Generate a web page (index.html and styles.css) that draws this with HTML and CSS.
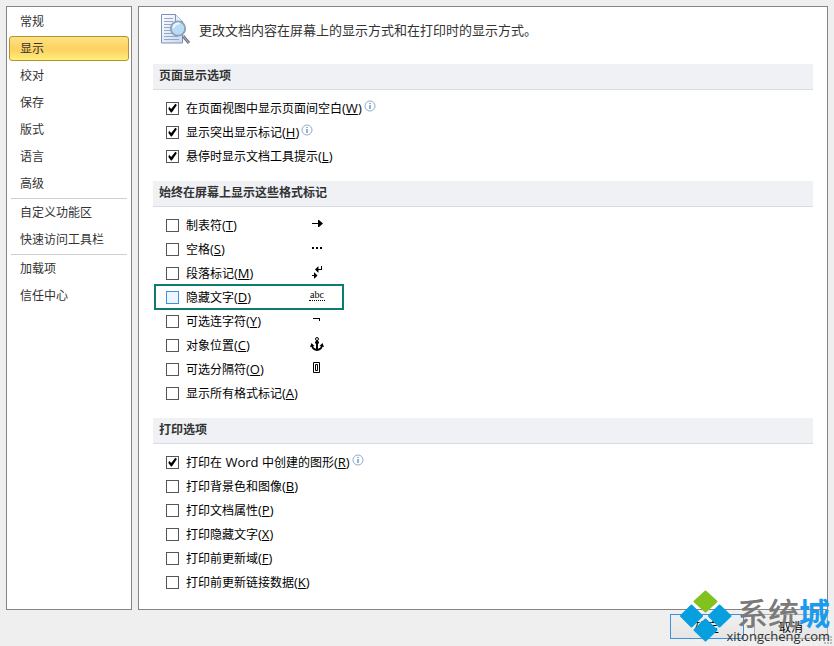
FILE: index.html
```html
<!DOCTYPE html>
<html lang="zh-CN">
<head>
<meta charset="utf-8">
<title>Word 选项</title>
<link rel="stylesheet" href="styles.css">
</head>
<body>
<svg class="defs" aria-hidden="true">
  <symbol id="info" viewBox="0 0 12 12"><circle cx="6" cy="6" r="5" fill="#fff" stroke="#8fabce"/><path d="M6 5v4M6 3v1" stroke="#4a7ebb" stroke-width="1.2"/></symbol>
</svg>
<div class="dialog">
  <nav class="sidebar">
    <a href="#">常规</a>
    <a href="#" class="active">显示</a>
    <a href="#">校对</a>
    <a href="#">保存</a>
    <a href="#">版式</a>
    <a href="#">语言</a>
    <a href="#">高级</a>
    <hr>
    <a href="#">自定义功能区</a>
    <a href="#">快速访问工具栏</a>
    <hr>
    <a href="#">加载项</a>
    <a href="#">信任中心</a>
  </nav>
  <main class="panel">
    <header class="intro">
      <svg width="32" height="32" viewBox="0 0 32 32" aria-hidden="true">
        <defs><linearGradient id="page" x2="1" y2="1"><stop stop-color="#fff"/><stop offset="1" stop-color="#c9d8ee"/></linearGradient></defs>
        <path d="M.5.500h14l7 7v21.500h-21z" fill="url(#page)" stroke="#7c92b8"/>
        <path d="M14.500.500v7h7" fill="#e5edf8" stroke="#7c92b8"/>
        <path d="M3 4.500h9M3 7.500h9M3 10.500h7M3 13.500h6M3 16.500h6M3 19.500h8M3 22.500h14M3 25.500h15" stroke="#91a8cd"/>
        <path d="M22 22l6 7" stroke="#70747b" stroke-width="3"/>
        <path d="M22 22l5.500 6.500" stroke="#b4bac2"/>
        <circle cx="17" cy="14.500" r="7.200" fill="#b9dcf5" stroke="#8f9fb6" stroke-width="1.800"/>
        <path d="M12.500 14a5 5 0 0 1 6-4.500" fill="none" stroke="#eef8ff" stroke-width="2"/>
      </svg>
      <p>更改文档内容在屏幕上的显示方式和在打印时的显示方式。</p>
    </header>

    <section>
      <h2>页面显示选项</h2>
      <div class="row"><label><input type="checkbox" checked>在页面视图中显示页面间空白<span class="latin">(<u>W</u>)</span></label><svg class="info"><use href="#info"/></svg></div>
      <div class="row"><label><input type="checkbox" checked>显示突出显示标记<span class="latin">(<u>H</u>)</span></label><svg class="info"><use href="#info"/></svg></div>
      <div class="row"><label><input type="checkbox" checked>悬停时显示文档工具提示<span class="latin">(<u>L</u>)</span></label></div>
    </section>

    <section>
      <h2>始终在屏幕上显示这些格式标记</h2>
      <div class="row mark-row"><label><input type="checkbox">制表符<span class="latin">(<u>T</u>)</span></label>
        <svg class="mark" viewBox="0 0 16 16"><path d="M3 7h6V4h1l4 3.500L10 11H9V8H3z"/></svg></div>
      <div class="row mark-row"><label><input type="checkbox">空格<span class="latin">(<u>S</u>)</span></label>
        <svg class="mark" viewBox="0 0 16 16"><path d="M3 7h2v2H3zM7 7h2v2H7zM11 7h2v2h-2z"/></svg></div>
      <div class="row mark-row"><label><input type="checkbox">段落标记<span class="latin">(<u>M</u>)</span></label>
        <svg class="mark" viewBox="0 0 16 16"><path d="M12 2h1v4H9.500v2.500H9L6 5.500l3-3h.5V5H12zM3 11h2V8.500h.5l3 3-3 3H5V12H3z"/></svg></div>
      <div class="row mark-row highlight"><label><input type="checkbox">隐藏文字<span class="latin">(<u>D</u>)</span></label>
        <span class="mark abc">abc</span></div>
      <div class="row mark-row"><label><input type="checkbox">可选连字符<span class="latin">(<u>Y</u>)</span></label>
        <svg class="mark" viewBox="0 0 16 16"><path d="M4 6h7v3h-1V7H4z"/></svg></div>
      <div class="row mark-row"><label><input type="checkbox">对象位置<span class="latin">(<u>C</u>)</span></label>
        <svg class="mark" viewBox="0 0 16 16"><path d="M8 4v10" fill="none" stroke="#000" stroke-width="2"/><path d="M6 6.500h4M3 9c0 3 2 4.500 5 5 3-.5 5-2 5-5" fill="none" stroke="#000" stroke-width="1.800"/><circle cx="8" cy="3" r="1.500" fill="#fff" stroke="#000"/><path d="M1 11l1.500-4 3 3zM15 11l-1.500-4-3 3z"/></svg></div>
      <div class="row mark-row"><label><input type="checkbox">可选分隔符<span class="latin">(<u>O</u>)</span></label>
        <svg class="mark" viewBox="0 0 16 16"><path d="M4.500 2.500h6v10h-6zM6.500 4.500h2v6h-2z" fill="none" stroke="#000"/></svg></div>
      <div class="row"><label><input type="checkbox">显示所有格式标记<span class="latin">(<u>A</u>)</span></label></div>
    </section>

    <section>
      <h2>打印选项</h2>
      <div class="row"><label><input type="checkbox" checked>打印在<span class="latin"> Word </span>中创建的图形<span class="latin">(<u>R</u>)</span></label><svg class="info"><use href="#info"/></svg></div>
      <div class="row"><label><input type="checkbox">打印背景色和图像<span class="latin">(<u>B</u>)</span></label></div>
      <div class="row"><label><input type="checkbox">打印文档属性<span class="latin">(<u>P</u>)</span></label></div>
      <div class="row"><label><input type="checkbox">打印隐藏文字<span class="latin">(<u>X</u>)</span></label></div>
      <div class="row"><label><input type="checkbox">打印前更新域<span class="latin">(<u>F</u>)</span></label></div>
      <div class="row"><label><input type="checkbox">打印前更新链接数据<span class="latin">(<u>K</u>)</span></label></div>
    </section>
  </main>
</div>
<footer class="actions">
  <button type="button" class="primary">确定</button>
  <button type="button">取消</button>
</footer>
<svg class="grip" width="9" height="9" viewBox="0 0 9 9" aria-hidden="true"><path d="M6 0h2v2H6zM3 3h2v2H3zM6 3h2v2H6zM0 6h2v2H0zM3 6h2v2H3zM6 6h2v2H6z" fill="#bdbdbd"/></svg>
<div class="brand">
  <svg width="52" height="52" viewBox="0 0 52 52" aria-hidden="true">
    <g stroke-linejoin="round" stroke-width="2">
      <path d="M25.500 1.500l11 10-11 10-11-10z" fill="#82c11e" stroke="#82c11e"/>
      <path d="M11.500 15.500l10.500 10.500-10.500 10.500L1 26zM39.500 15.500l11 10.500-11 10.500L29 26zM25.500 29.500l11 10.500-11 10.500-11-10.500z" fill="#089fdf" stroke="#089fdf"/>
    </g>
  </svg>
  <div class="brand-text">
    <div class="brand-name">系统<span>城</span></div>
    <div class="brand-url">xitongcheng.com</div>
  </div>
</div>
</body>
</html>
```

FILE: styles.css
```css
* { box-sizing: border-box; }

body {
  margin: 0;
  min-height: 100vh;
  padding: 6px 6px 0;
  background: #efefef;
  color: #000;
  font: 12px/24px "Noto Sans CJK SC", sans-serif;
}

.defs { position: absolute; width: 0; height: 0; }

.dialog { display: flex; gap: 6px; }

.sidebar, .panel { background: #fff; border: 1px solid #848484; }

.sidebar { flex: 0 0 126px; padding: 2px; }

.sidebar a {
  display: block;
  margin-bottom: 2px;
  padding: 0 10px 2px;
  border: 1px solid transparent;
  border-radius: 3px;
  color: #333;
  line-height: 21px;
  text-decoration: none;
}

.sidebar .active {
  border-color: #b5922e;
  background: linear-gradient(#fde384, #fdd365 45%, #fdd463 60%, #fff07c);
}

.sidebar hr {
  margin: 0 2px 1px;
  border: 0;
  border-top: 1px solid #d0d0d0;
}

.panel { flex: 1; padding: 6px 14px 2px; }

.intro {
  display: flex;
  align-items: center;
  gap: 6px;
  height: 34px;
  margin-bottom: 17px;
  padding-left: 8px;
  color: #333;
  font-size: 13px;
}

.intro p { margin: 0; }

section { margin-bottom: 13px; }

h2 {
  margin: 0 0 6px;
  padding: 0 6px 3px;
  border-bottom: 1px solid #d9dce2;
  background: #eff1f5;
  color: #333;
  font-size: 12px;
  line-height: 22px;
}

.row {
  display: flex;
  align-items: center;
  height: 24px;
  margin-left: 2px;
  padding-left: 11px;
}

label { display: flex; align-items: center; white-space: pre; }

.latin { font-family: "Open Sans", sans-serif; font-size: 13px; }

u { text-underline-offset: 1px; }

input {
  appearance: none;
  display: grid;
  width: 13px;
  height: 13px;
  margin: 0 7px 0 0;
  border: 1px solid #555;
  background: #fff;
}

input:checked::before {
  content: "";
  background: #000;
  clip-path: polygon(14% 50%, 22% 42%, 38% 58%, 76% 12%, 90% 22%, 44% 90%, 36% 90%, 14% 62%);
}

.info { width: 12px; height: 12px; margin: 0 0 4px 2px; }

.mark-row { width: 188px; justify-content: space-between; padding-right: 18px; }

.mark { width: 16px; height: 16px; margin-bottom: 3px; }

.abc {
  height: 11px;
  border-bottom: 1px dotted #000;
  font: 10px/10px "Liberation Serif", serif;
  text-align: center;
}

.highlight { outline: 2px solid #0c7c72; outline-offset: -1px; }

.highlight input { border-color: #3c92e0; background: #edf5ff; }

.actions { display: flex; justify-content: flex-end; gap: 10px; padding-top: 4px; }

button {
  width: 74px;
  height: 25px;
  padding: 0;
  border: 1px solid #acacac;
  background: linear-gradient(#f0f0f0, #e5e5e5);
  font: inherit;
  color: #000;
}

.primary { border-color: #3c92e0; }

.grip { position: absolute; right: 1px; bottom: 1px; }

.brand {
  position: absolute;
  right: 4px;
  bottom: 2px;
  display: flex;
  align-items: flex-end;
}

.brand svg { margin: 0 -6px 2px 0; }

.brand-name {
  color: #7a7a7a;
  font-size: 31px;
  font-weight: 500;
  line-height: 32px;
  text-align: right;
}

.brand-name span { color: #1a9bee; font-weight: 700; }

.brand-url {
  color: #333;
  font: 13px/16px "Open Sans", sans-serif;
}
```
